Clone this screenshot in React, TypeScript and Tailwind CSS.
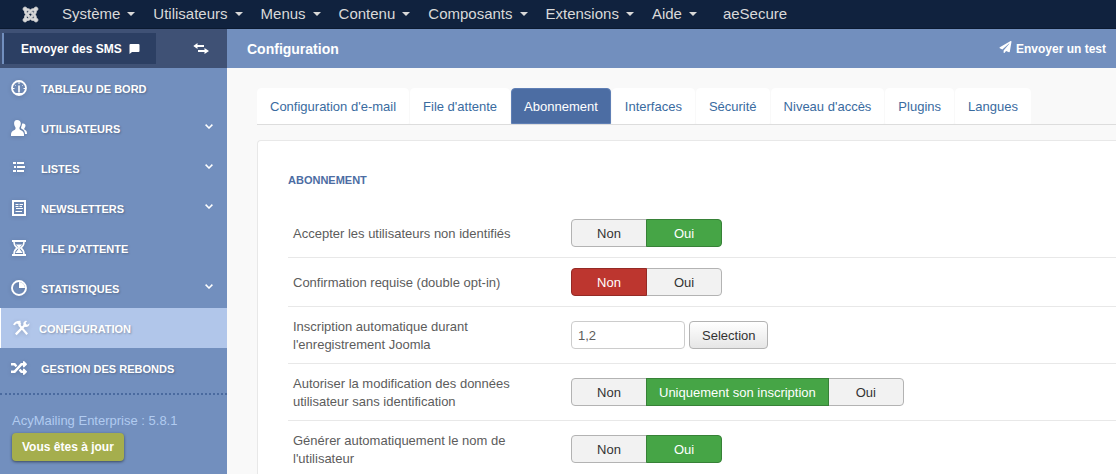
import { useState } from "react"
import type { ReactNode } from "react"
import { FaJoomla, FaPaperPlane, FaRandom } from "react-icons/fa"

const topMenu = ["Système", "Utilisateurs", "Menus", "Contenu", "Composants", "Extensions", "Aide"]

const tabs = [
  "Configuration d'e-mail",
  "File d'attente",
  "Abonnement",
  "Interfaces",
  "Sécurité",
  "Niveau d'accès",
  "Plugins",
  "Langues",
]

function DashboardIcon() {
  return (
    <svg viewBox="0 0 16 16" className="w-4 h-4" fill="none" stroke="currentColor">
      <circle cx="8" cy="8" r="7" strokeWidth="1.8" />
      <path d="M8 2v2M3.800 4.800l.8.8M12.200 4.800l-.8.8M2 8.500h1.500M12.500 8.500H14" strokeWidth="1" />
      <path d="M8 5.500v7" strokeWidth="1.600" />
      <path d="M5 14h6" strokeWidth="2" />
    </svg>
  )
}

function UsersIcon() {
  return (
    <svg viewBox="0 0 16 16" className="w-4 h-4" fill="currentColor">
      <path d="M6 0C3.900 0 3 1.500 3.100 3.600c.1 1.700.7 2.900 1.300 3.700.3 1.500.1 2.200-.9 2.700C1.300 11 0 12 0 14.500V16h13v-1.500C13 12 11.700 11 9.500 10c-1-.5-1.200-1.200-.9-2.700.6-.8 1.100-2 1.200-3.700C9.900 1.500 8.500 0 6 0z" />
      <path d="M11.200 3.500c-.4 1.700-.8 3-1.200 4 .1.900.3 1.200 1 1.600 1.900.9 2.900 2.300 3 4.900h2c0-2.300-.5-3.300-2.200-4.200-.7-.4-.7-.9-.4-1.600.7-.7 1.100-1.500 1.100-2.600 0-1.500-1.100-2.600-3.300-2.100z" />
    </svg>
  )
}

function ListIcon() {
  return (
    <svg viewBox="0 0 16 16" className="w-4 h-4" fill="currentColor">
      <path d="M2 2h3v2H2zM6 2h7v2H6zM3 6h2v2H3zM6 6h8v2H6zM2 10h3v2H2zM6 10h7v2H6z" />
    </svg>
  )
}

function NewsIcon() {
  return (
    <svg viewBox="0 0 16 16" className="w-4 h-4" fill="none" stroke="currentColor">
      <path d="M2 1h12v14H2z" strokeWidth="2" />
      <path d="M4.500 4.500h3M8.500 4.500H12M4.500 6.500h3M8.500 6.500H11M5 8.500h7M4.500 11.500H11" strokeWidth="1" />
    </svg>
  )
}

function HourglassIcon() {
  return (
    <svg viewBox="0 0 16 16" className="w-4 h-4" fill="none" stroke="currentColor">
      <path d="M1 1h14M1 15h14" strokeWidth="2" />
      <path d="M3 2c0 3 1 4.500 3.300 6C4 9.500 3 11 3 14M13 2c0 3-1 4.500-3.300 6C12 9.500 13 11 13 14" strokeWidth="1.500" />
      <path d="M4.800 4.500h6.400L8.800 7.300v1.900l2.900 3.800H4.300l2.900-3.800V7.300z" fill="currentColor" stroke="none" />
    </svg>
  )
}

function PieIcon() {
  return (
    <svg viewBox="0 0 16 16" className="w-4 h-4">
      <circle cx="8" cy="8" r="7" fill="none" stroke="currentColor" strokeWidth="1.900" />
      <path d="M8 2v6h6A6 6 0 0 0 8 2z" fill="currentColor" />
    </svg>
  )
}

function ToolsIcon() {
  return (
    <svg viewBox="0 0 17 16" className="w-[17px] h-4" fill="none" stroke="currentColor">
      <path d="M1 5C2 2.400 4 1.600 7.500 1.700" strokeWidth="2" />
      <path d="M3.500 2.800l3 3L8.300 4 6.500 1.300z" fill="currentColor" stroke="none" />
      <path d="M6 4.800l8.200 9.400" strokeWidth="2.100" />
      <path d="M2.800 14.400l8.700-8.900" strokeWidth="2.300" />
      <path d="M12.700.8c-1.900.6-2.700 2.300-2.200 4.200L12 6.800c2 .6 4-.4 4.500-2.700V3.200L14.600 4.800l-1.500-.5-.4-1.500 1.500-1.700z" fill="currentColor" stroke="none" />
    </svg>
  )
}

function ChevronIcon() {
  return (
    <svg viewBox="0 0 8 5" className="w-2 h-[5px] mb-[3px]" fill="none" stroke="currentColor" strokeWidth="1.500">
      <path d="M.6.6L4 4 7.400.6" />
    </svg>
  )
}

function SwapIcon() {
  return (
    <svg viewBox="0 0 16 12" className="w-4 h-3" fill="currentColor">
      <path d="M4.500 0v2H11v2H4.500v2L.3 3zM11.500 5v2H5v2h6.500v2L16 8z" />
    </svg>
  )
}

function SpeechIcon() {
  return (
    <svg viewBox="0 0 11 10" className="w-[11px] h-[10px]" fill="currentColor">
      <path d="M1.500 0h8Q10.500 0 10.500 1v6q0 1-1 1H3L.5 10V1q0-1 1-1z" />
    </svg>
  )
}

interface SideItem {
  label: string
  icon: ReactNode
  hasMenu?: boolean
}

const sideItems: SideItem[] = [
  { label: "TABLEAU DE BORD", icon: <DashboardIcon /> },
  { label: "UTILISATEURS", icon: <UsersIcon />, hasMenu: true },
  { label: "LISTES", icon: <ListIcon />, hasMenu: true },
  { label: "NEWSLETTERS", icon: <NewsIcon />, hasMenu: true },
  { label: "FILE D'ATTENTE", icon: <HourglassIcon /> },
  { label: "STATISTIQUES", icon: <PieIcon />, hasMenu: true },
  { label: "CONFIGURATION", icon: <ToolsIcon /> },
  { label: "GESTION DES REBONDS", icon: <FaRandom className="w-4 h-4" /> },
]

interface ToggleProps {
  label: string
  options: string[]
  initial: string
}

function Toggle({ label, options, initial }: ToggleProps) {
  const [value, setValue] = useState(initial)

  return (
    <div role="group" aria-label={label} className="flex">
      {options.map((option) => (
        <button
          key={option}
          type="button"
          aria-pressed={value === option}
          onClick={() => setValue(option)}
          className={`h-7 min-w-[76px] px-3 pt-[2px] border -ml-px first:ml-0 first:rounded-l last:rounded-r whitespace-nowrap ${
            value !== option
              ? "bg-[#f2f2f2] border-[#b3b3b3] text-[#333]"
              : option === "Non"
                ? "relative bg-[#bd362f] border-[#942a25] text-white"
                : "relative bg-[#46a546] border-[#378137] text-white"
          }`}
        >
          {option}
        </button>
      ))}
    </div>
  )
}

function SettingRow({ label, children }: { label: ReactNode; children: ReactNode }) {
  return (
    <tr className="border-b border-[#e8e8e8]">
      <th scope="row" className="w-[278px] pl-[5px] pr-10 pt-[11px] pb-[9px] text-left font-normal align-middle">
        {label}
      </th>
      <td className="pl-[5px] py-[10px] align-middle">{children}</td>
    </tr>
  )
}

export default function App() {
  const [activeTab, setActiveTab] = useState("Abonnement")
  const [groups, setGroups] = useState("1,2")

  return (
    <div className="min-h-screen flex flex-col bg-[#f9f9f9] font-['Liberation_Sans',Arial,sans-serif] text-[13px] leading-[18px] text-[#5c5c5c]">
      {/* Top bar */}
      <nav className="h-[29px] flex items-center bg-[#10223e] border-b border-[#0b1a31] text-[15px] leading-5 text-[#d9d9d9] whitespace-nowrap">
        <a href="#" aria-label="Joomla" className="ml-[22px] mr-[23px]">
          <FaJoomla className="w-[17px] h-[17px] stroke-current [stroke-width:24]" />
        </a>
        {topMenu.map((item) => (
          <button key={item} type="button" className="flex items-center gap-[7px] mr-[18px] pb-px">
            {item}
            <span className="mt-px border-x-4 border-t-4 border-x-transparent border-t-[#d9d9d9]" />
          </button>
        ))}
        <a href="#" className="ml-2 pb-px">
          aeSecure
        </a>
      </nav>

      <div className="flex-1 flex">
        {/* Sidebar */}
        <aside className="w-[227px] shrink-0 bg-[#728fbe] text-white">
          <div className="h-[39px] flex items-center bg-[#3f5175]">
            <button
              type="button"
              className="h-[31px] w-[154px] ml-[2px] pl-[17px] flex items-center gap-[7px] bg-[#2c3f63] border-l-2 border-[#728fbe] text-[12px] font-bold whitespace-nowrap"
            >
              Envoyer des SMS
              <SpeechIcon />
            </button>
            <button type="button" aria-label="Réduire le menu" className="ml-[37px]">
              <SwapIcon />
            </button>
          </div>
          <nav className="text-[11px] font-bold [text-shadow:1px_1px_2px_rgba(0,0,0,0.25)]">
            {sideItems.map((item) => (
              <a
                key={item.label}
                href="#"
                className={`h-10 flex items-center pr-[14px] whitespace-nowrap ${
                  item.label === "CONFIGURATION" ? "bg-[#b1c6ea] border-l border-white pl-3 gap-[9px]" : "pl-[11px] gap-[14px]"
                }`}
              >
                <span className="drop-shadow-sm">{item.icon}</span>
                <span className="flex-1 pt-[2px]">{item.label}</span>
                {item.hasMenu && <ChevronIcon />}
              </a>
            ))}
          </nav>
          <div className="mt-[5px] border-t-2 border-dotted border-[#4a6a9f] px-3 pt-4">
            <p className="leading-5 text-[#b1cbf0]">AcyMailing Enterprise : 5.8.1</p>
            <button
              type="button"
              className="h-7 mt-[2px] px-[10px] rounded bg-[#a5ae4d] text-[12px] font-bold shadow-[0_1px_3px_rgba(0,0,0,0.5)] whitespace-nowrap"
            >
              Vous êtes à jour
            </button>
          </div>
        </aside>

        <main className="flex-1 min-w-0">
          {/* Page header */}
          <header className="h-[39px] flex items-center justify-between pl-5 pr-[10px] bg-[#728fbe] text-white font-bold">
            <h1 className="text-[14px]">Configuration</h1>
            <button type="button" className="flex items-center gap-1 text-[12px]">
              <FaPaperPlane className="w-[13px] h-[12px] mb-1" />
              Envoyer un test
            </button>
          </header>

          {/* Tabs */}
          <div role="tablist" className="flex gap-px mt-5 ml-[30px] border-b border-[#ddd]">
            {tabs.map((tab) => (
              <button
                key={tab}
                type="button"
                role="tab"
                aria-selected={activeTab === tab}
                onClick={() => setActiveTab(tab)}
                className={`h-9 px-3 pt-[2px] rounded-t border whitespace-nowrap ${
                  activeTab === tab ? "bg-[#4c6da3] border-[#5f7fb5] text-white" : "bg-white border-white text-[#3a6b9f]"
                }`}
              >
                {tab}
              </button>
            ))}
          </div>

          {/* Settings */}
          <section className="mt-[15px] ml-[30px] pl-[30px] pt-[30px] bg-white border-l border-t border-[#e8e8e8] rounded-tl">
            <h2 className="text-[11px] font-bold text-[#4c6da3]">ABONNEMENT</h2>
            <table className="w-full mt-5 border-collapse">
              <tbody>
                <SettingRow label="Accepter les utilisateurs non identifiés">
                  <Toggle label="Accepter les utilisateurs non identifiés" options={["Non", "Oui"]} initial="Oui" />
                </SettingRow>
                <SettingRow label="Confirmation requise (double opt-in)">
                  <Toggle label="Confirmation requise" options={["Non", "Oui"]} initial="Non" />
                </SettingRow>
                <SettingRow label={<label htmlFor="groups">Inscription automatique durant l'enregistrement Joomla</label>}>
                  <div className="flex gap-1">
                    <input
                      id="groups"
                      type="text"
                      value={groups}
                      onChange={(e) => setGroups(e.target.value)}
                      className="h-7 w-[114px] px-[6px] bg-white border border-[#ccc] rounded"
                    />
                    <button
                      type="button"
                      className="h-7 px-3 pt-[2px] border border-[#b3b3b3] rounded bg-gradient-to-b from-white to-[#e6e6e6] text-[#333]"
                    >
                      Selection
                    </button>
                  </div>
                </SettingRow>
                <SettingRow label="Autoriser la modification des données utilisateur sans identification">
                  <Toggle
                    label="Autoriser la modification des données utilisateur"
                    options={["Non", "Uniquement son inscription", "Oui"]}
                    initial="Uniquement son inscription"
                  />
                </SettingRow>
                <SettingRow label="Générer automatiquement le nom de l'utilisateur">
                  <Toggle label="Générer automatiquement le nom" options={["Non", "Oui"]} initial="Oui" />
                </SettingRow>
              </tbody>
            </table>
          </section>
        </main>
      </div>
    </div>
  )
}
